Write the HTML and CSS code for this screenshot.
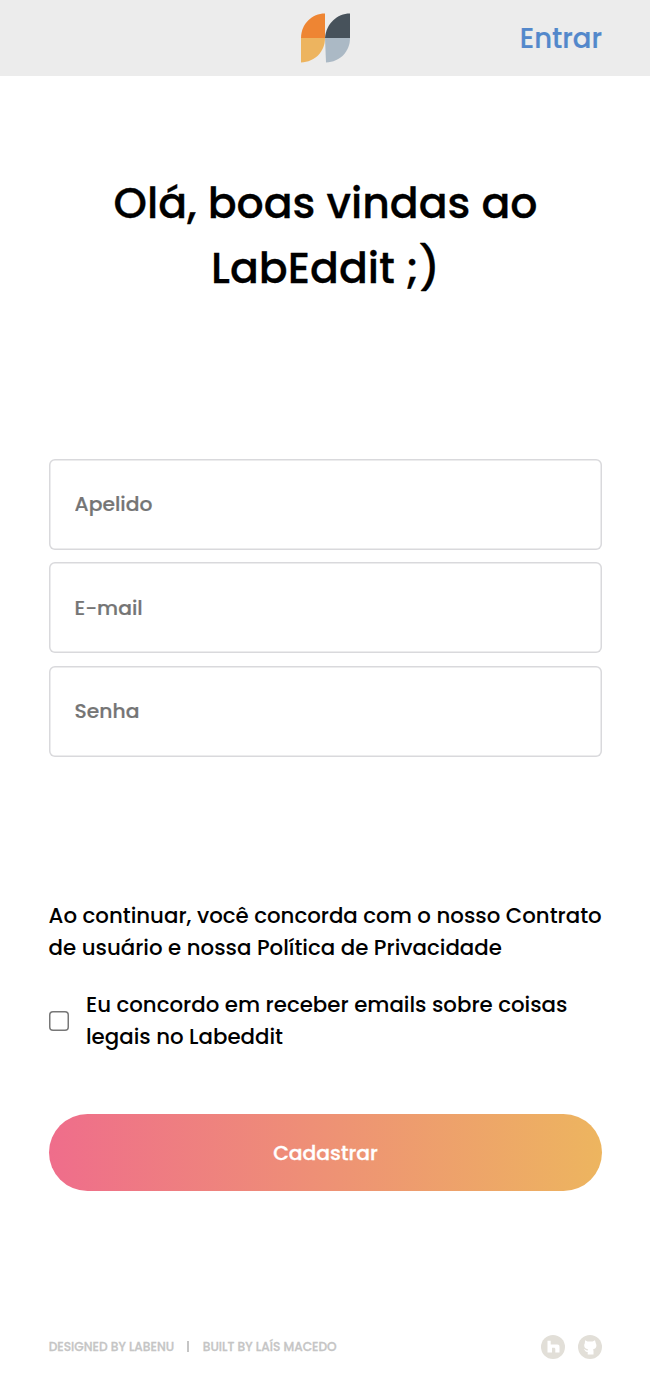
FILE: index.html
```html
<!DOCTYPE html>
<html lang="pt-BR">
<head>
<meta charset="utf-8">
<title>LabEddit</title>
<link rel="stylesheet" href="styles.css">
</head>
<body>
<header class="topbar">
  <svg class="logo" viewBox="0 0 50 50" aria-label="Labenu">
    <path fill="#ee8533" d="M0 25C0 11 11 .5 24 .5V25Z"/>
    <path fill="#47525b" d="M24 25C25 11 36 .5 49 .5V25Z"/>
    <path fill="#edb45f" d="M0 25H24C24 38.500 14 49 0 49.500Z"/>
    <path fill="#abb9c5" d="M24 25H49C49 38.500 39 49 25 49.500Z"/>
  </svg>
  <a class="login">Entrar</a>
</header>
<main class="page">
  <h1 class="title">Olá, boas vindas ao<br>LabEddit ;)</h1>
  <form class="form">
    <div class="fields">
      <input class="field" type="text" placeholder="Apelido">
      <input class="field field-low" type="email" placeholder="E-mail">
      <input class="field field-low" type="password" placeholder="Senha">
    </div>
    <p class="terms">Ao continuar, você concorda com o nosso Contrato<br>de usuário e nossa Política de Privacidade</p>
    <label class="consent"><input class="check" type="checkbox"><span>Eu concordo em receber emails sobre coisas<br>legais no Labeddit</span></label>
    <button class="submit" type="button">Cadastrar</button>
  </form>
</main>
<footer class="footer">
  <span class="credit">DESIGNED BY LABENU</span><span class="bar"></span><span class="credit">BUILT BY LAÍS MACEDO</span>
  <div class="social">
    <svg viewBox="0 0 24 24"><circle cx="12" cy="12" r="12" fill="#e2dfd8"/><path fill="#fff" d="M6.500 5.700h3.200V9.500h6.600c1.500 0 2.200.9 2.200 2.300v5.700h-4.200v-3.300c0-1-.5-1.500-1.400-1.500H11v4.800H6.500Z"/></svg>
    <svg viewBox="0 0 24 24"><circle cx="12" cy="12" r="12" fill="#e2dfd8"/><path fill="#fff" d="M7.100 5.200 9.500 6.500h5L17 5.200l.8 3c1.400 2.500.4 5.600-2.800 6.200l.5 1.400v3.700H9.700v-2.600c-1.800.2-2.200-.4-2.700-1.400l-1.200-1.100c1.500-.3 2.100 1.500 3.900 1.100l.5-1.100c-3.400-.6-4.900-3.500-3.400-6.200Z"/></svg>
  </div>
</footer>
</body>
</html>
```
FILE: styles.css
```css
* { box-sizing: border-box; }
body { margin: 0; height: 1394px; display: flex; flex-direction: column; background: #fff; color: #000; font-family: Poppins, Inter, "Open Sans", sans-serif; font-weight: 500; }
input, button { font: inherit; }
.topbar { height: 76px; flex: none; padding: 0 48px 0 50px; background: #ececec; display: grid; grid-template-columns: 1fr 50px 1fr; align-items: center; }
.logo { grid-column: 2; width: 50px; height: 50px; }
.login { justify-self: end; padding-top: 1px; color: #5388cb; font-size: 27.500px; line-height: 40px; white-space: nowrap; -webkit-text-stroke: .2px #5388cb; }
.page { padding: 0 48px; }
.title { margin: 95px 0 0; padding-left: 1px; font-size: 42.600px; line-height: 65px; font-weight: 500; text-align: center; white-space: nowrap; -webkit-text-stroke: .3px #000; }
.form { display: flex; flex-direction: column; }
.fields { margin-top: 158px; display: flex; flex-direction: column; gap: 12.400px; }
.field { width: 553.500px; height: 91px; margin-left: .6px; padding: 0 25px 2px 26px; border: 0; border-radius: 6px; background: #fff; box-shadow: inset 0 0 0 1.500px #d9d9dc; font-size: 20.300px; }
.field-low { padding-bottom: 0; }
.field::placeholder { color: #757575; opacity: 1; -webkit-text-stroke: .2px #757575; }
.terms { margin: 143px 0 0 .6px; font-size: 21.300px; line-height: 32px; white-space: nowrap; }
.consent { margin-top: 25px; display: flex; align-items: center; gap: 17.400px; padding-left: .6px; font-size: 21.300px; line-height: 32px; white-space: nowrap; }
.check { appearance: none; margin: 0; width: 20px; height: 20px; border-radius: 4px; box-shadow: inset 0 0 0 1.500px #777; flex: none; }
.submit { margin-top: 61px; margin-left: 1px; width: 553px; height: 77px; padding: 2px 0 0; border: 0; border-radius: 39px; background: linear-gradient(90deg, #ef6d8b, #edb55f); color: #fff; font-size: 20.300px; -webkit-text-stroke: .3px #fff; }
.footer { margin: 144px 48px 0; height: 24px; display: flex; align-items: center; color: #c5c5c5; font-size: 12.200px; white-space: nowrap; }
.credit { padding: 1px 0 0 .7px; -webkit-text-stroke: .3px #c5c5c5; }
.bar { width: 2px; height: 11px; margin: 0 13px; background: #c5c5c5; }
.social { margin-left: auto; display: flex; gap: 13px; }
.social svg { width: 24px; height: 24px; }
```
